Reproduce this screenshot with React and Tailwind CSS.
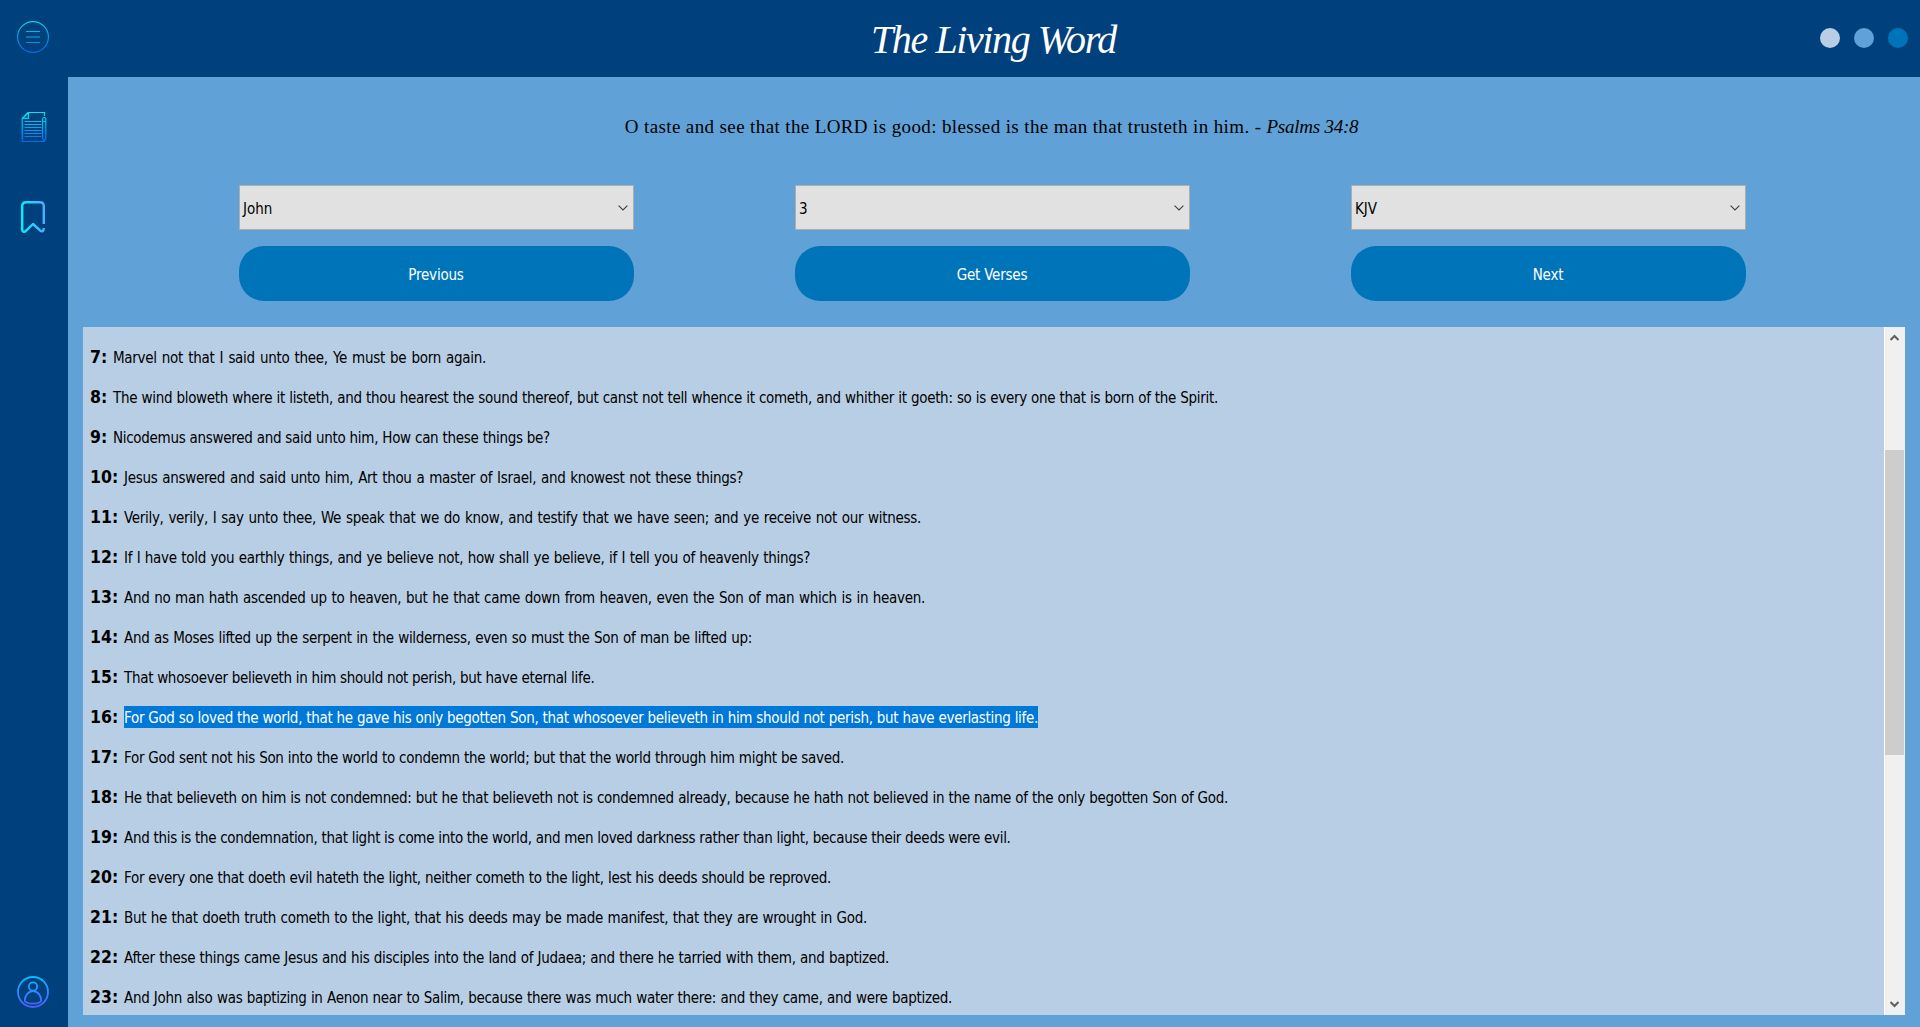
const verses = [
  { n: 7, w: 373, t: "Marvel not that I said unto thee, Ye must be born again." },
  { n: 8, w: 1105, t: "The wind bloweth where it listeth, and thou hearest the sound thereof, but canst not tell whence it cometh, and whither it goeth: so is every one that is born of the Spirit." },
  { n: 9, w: 437, t: "Nicodemus answered and said unto him, How can these things be?" },
  { n: 10, w: 619, t: "Jesus answered and said unto him, Art thou a master of Israel, and knowest not these things?" },
  { n: 11, w: 797, t: "Verily, verily, I say unto thee, We speak that we do know, and testify that we have seen; and ye receive not our witness." },
  { n: 12, w: 686, t: "If I have told you earthly things, and ye believe not, how shall ye believe, if I tell you of heavenly things?" },
  { n: 13, w: 801, t: "And no man hath ascended up to heaven, but he that came down from heaven, even the Son of man which is in heaven." },
  { n: 14, w: 628, t: "And as Moses lifted up the serpent in the wilderness, even so must the Son of man be lifted up:" },
  { n: 15, w: 468, t: "That whosoever believeth in him should not perish, but have eternal life." },
  { n: 16, w: 914, selected: true, t: "For God so loved the world, that he gave his only begotten Son, that whosoever believeth in him should not perish, but have everlasting life." },
  { n: 17, w: 720, t: "For God sent not his Son into the world to condemn the world; but that the world through him might be saved." },
  { n: 18, w: 1104, t: "He that believeth on him is not condemned: but he that believeth not is condemned already, because he hath not believed in the name of the only begotten Son of God." },
  { n: 19, w: 884, t: "And this is the condemnation, that light is come into the world, and men loved darkness rather than light, because their deeds were evil." },
  { n: 20, w: 707, t: "For every one that doeth evil hateth the light, neither cometh to the light, lest his deeds should be reproved." },
  { n: 21, w: 743, t: "But he that doeth truth cometh to the light, that his deeds may be made manifest, that they are wrought in God." },
  { n: 22, w: 765, t: "After these things came Jesus and his disciples into the land of Judaea; and there he tarried with them, and baptized." },
  { n: 23, w: 828, t: "And John also was baptizing in Aenon near to Salim, because there was much water there: and they came, and were baptized." },
];

const controls = [
  { value: "John", action: "Previous" },
  { value: "3", action: "Get Verses" },
  { value: "KJV", action: "Next" },
];

function MenuIcon() {
  return (
    <svg className="h-8 w-8" viewBox="0 0 32 32" fill="none" stroke="url(#menuFill)">
      <defs>
        <linearGradient id="menuFill" gradientUnits="userSpaceOnUse" x1="0" y1="0" x2="0" y2="32">
          <stop offset="0" stopColor="#00e0e0" />
          <stop offset="1" stopColor="#0a66f0" />
        </linearGradient>
      </defs>
      <circle cx="16" cy="16" r="15.4" strokeWidth="1.1" />
      <path d="M9 10.5h14M9 21.5h14" strokeWidth="1.1" />
      <path d="M9 16h14" strokeWidth="1.7" strokeOpacity="0.65" />
    </svg>
  );
}

function NotesIcon() {
  return (
    <svg className="h-8 w-8" viewBox="0 0 32 32" fill="none" stroke="url(#notesFill)">
      <defs>
        <linearGradient id="notesFill" gradientUnits="userSpaceOnUse" x1="0" y1="0" x2="0" y2="32">
          <stop offset="0" stopColor="#00eeee" />
          <stop offset="1" stopColor="#0068ee" />
        </linearGradient>
      </defs>
      <path d="M27.500 5V1.500H11L5.200 7.600V30.500H27" strokeWidth="1.2" />
      <path d="M11.500 1.500V7.300H5.200M6 7L11 2" strokeWidth="1.3" />
      <path d="M7.500 10.500h17M7.500 13.500h17M7.500 16.500h17M7.500 19.500h17M7.500 22.500h17M7.500 25.500h17" strokeWidth="1" />
      <path d="M25.600 8q0-1.500 1.600-1.500T28.800 8V27l-1.600 3.200L25.600 27zM25.600 10.500h3.200" strokeWidth="1.2" />
      <path d="M5.800 12V30" strokeWidth="1.200" strokeOpacity="0.5" />
    </svg>
  );
}

function BookmarkIcon() {
  return (
    <svg className="h-8 w-8" viewBox="0 0 32 32" fill="none" stroke="url(#markFill)" strokeWidth="2.400" strokeLinejoin="round">
      <defs>
        <linearGradient id="markFill" gradientUnits="userSpaceOnUse" x1="4" y1="0" x2="28" y2="0">
          <stop offset="0" stopColor="#00f2fe" />
          <stop offset="1" stopColor="#4facfe" />
        </linearGradient>
      </defs>
      <path d="M26.800 23V5.200Q26.800 1.200 22.800 1.200H9.200Q5.200 1.200 5.200 5.200V28.500C5.200 30.800 7.300 31.400 8.900 29.800L16 23L23 29.400C25 31.300 26.800 30.300 26.800 27" />
    </svg>
  );
}

function UserIcon() {
  return (
    <svg className="h-8 w-8" viewBox="0 0 32 32" fill="none" stroke="url(#userFill)" strokeWidth="1.8">
      <defs>
        <linearGradient id="userFill" gradientUnits="userSpaceOnUse" x1="0" y1="0" x2="0" y2="32">
          <stop offset="0" stopColor="#00c0ff" />
          <stop offset="1" stopColor="#5558ff" />
        </linearGradient>
      </defs>
      <circle cx="16" cy="16" r="15" />
      <circle cx="16" cy="10.500" r="4.200" />
      <path d="M16 15C11.500 15 7.800 19.500 7.800 24.500C7.800 26.300 11.500 27.700 16 27.700S24.200 26.300 24.200 24.500C24.200 19.500 20.500 15 16 15Z" />
    </svg>
  );
}

function ScrollArrow({ down }) {
  return (
    <svg className="h-[7px] w-[9px]" viewBox="0 0 9 7" fill="none" stroke="#606060" strokeWidth="2.100">
      <path d={down ? "M0.500 1L4.500 5L8.500 1" : "M0.500 6L4.500 2L8.500 6"} />
    </svg>
  );
}

export default function App() {
  return (
    <div className="flex h-[1027px] w-[1920px] overflow-hidden bg-[#00407c] font-['DejaVu_Sans_Condensed','DejaVu_Sans',sans-serif] text-[15px] text-black">
      <aside className="flex w-[68px] shrink-0 flex-col items-center pr-[2px] pt-[21px] pb-[19px]">
        <MenuIcon />
        <div className="mt-[58px] flex flex-col gap-[58px]">
          <NotesIcon />
          <BookmarkIcon />
        </div>
        <div className="mt-auto">
          <UserIcon />
        </div>
      </aside>
      <div className="flex min-w-0 flex-1 flex-col">
        <header className="grid h-[77px] shrink-0 grid-cols-[1fr_auto_1fr] items-center pr-3">
          <span />
          <h1 className="pt-[2px] pl-[11px] font-['Liberation_Serif',serif] text-[40px] leading-none tracking-[-1.4px] text-white italic">The Living Word</h1>
          <div className="flex justify-end gap-[14px] pb-[2px]">
            <span className="h-5 w-5 rounded-full bg-[#b8cee5]" />
            <span className="h-5 w-5 rounded-full bg-[#60a2d8]" />
            <span className="h-5 w-5 rounded-full bg-[#0074b9]" />
          </div>
        </header>
        <main className="flex min-h-0 flex-1 flex-col bg-[#60a2d8] pr-[15px] pb-3 pl-[15px]">
          <p className="flex h-[108px] shrink-0 items-start justify-center pt-[38px] pr-[5px] font-['Liberation_Serif',serif] text-[19px] leading-6 tracking-[0.38px] whitespace-pre">
            O taste and see that the LORD is good: blessed is the man that trusteth in him. - <em className="tracking-[-0.25px]">Psalms 34:8</em>
          </p>
          <div className="grid h-[142px] shrink-0 grid-cols-[395px_395px_395px] content-start gap-x-[161px] pl-[156px]">
            {controls.map((c) => (
              <div key={c.action} className="flex flex-col gap-4">
                <button className="flex h-[45px] items-center justify-between border border-[#adadad] bg-[#e1e1e1] pr-[5px] pl-[3px] leading-5">
                  <span className="pt-[2px]">{c.value}</span>
                  <svg className="h-[6px] w-[10px]" viewBox="0 0 10 6" fill="none" stroke="#404040" strokeWidth="1.100">
                    <path d="M0.600 0.600L5 5L9.400 0.600" />
                  </svg>
                </button>
                <button className="h-[55px] rounded-[25px] bg-[#0074b9] pt-[3px] pr-[1px] leading-5 tracking-[-0.2px] text-white">{c.action}</button>
              </div>
            ))}
          </div>
          <section className="flex h-[688px] w-[1822px] shrink-0 overflow-hidden bg-[#b8cee5]">
            <ol className="flex-1 overflow-hidden pt-[10px] pl-[7px]">
              {verses.map((v) => (
                <li key={v.n} className="flex h-10 items-baseline leading-10">
                  <b className={v.n < 10 ? "w-[23px] shrink-0 text-[17.5px]" : "w-[34px] shrink-0 text-[17.5px]"}>{v.n}:</b>
                  <span
                    className={v.selected ? "bg-[#0078d7] pt-[2px] leading-[20px] whitespace-nowrap text-white tracking-[-0.3px] [text-align-last:justify]" : "leading-[22px] whitespace-nowrap tracking-[-0.3px] [text-align-last:justify]"}
                    style={{ width: v.w }}
                  >
                    {v.t}
                  </span>
                </li>
              ))}
            </ol>
            <div className="flex w-[21px] flex-col items-center border-l border-white bg-[#f0f0f0] pt-[7px] pb-[7px]">
              <div className="flex w-full justify-center pr-[1px]"><ScrollArrow /></div>
              <div className="mt-[109px] mr-[1px] h-[305px] w-[19px] bg-[#cdcdcd]" />
              <div className="mt-auto flex w-full justify-center pr-[1px]"><ScrollArrow down /></div>
            </div>
          </section>
        </main>
      </div>
    </div>
  );
}
